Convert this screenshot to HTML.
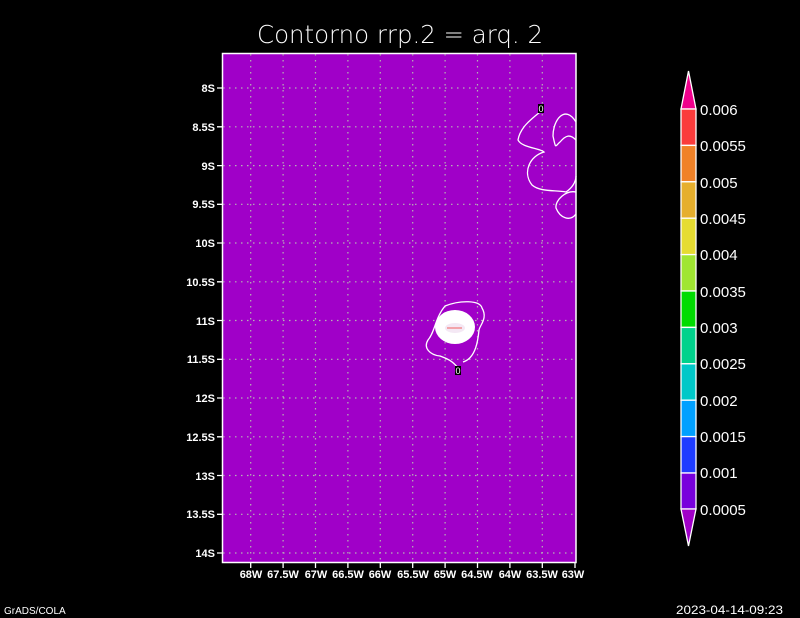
<!DOCTYPE html>
<html><head><meta charset="utf-8"><style>html,body{margin:0;padding:0;background:#000;}svg{display:block}</style></head>
<body>
<svg width="800" height="618" viewBox="0 0 800 618" xmlns="http://www.w3.org/2000/svg" font-family="Liberation Sans, sans-serif">
<rect width="800" height="618" fill="#000"/>
<text x="257" y="43" fill="#fff" font-size="25" textLength="286" lengthAdjust="spacingAndGlyphs" font-family="DejaVu Sans, sans-serif" font-weight="200">Contorno rrp.2 = arq. 2</text>
<rect x="222.5" y="53.5" width="353.5" height="509" fill="#a000c8" stroke="#fff" stroke-width="1.5"/>
<g stroke="#b4b4b4" stroke-width="1.2" stroke-dasharray="1.5 4.5">
<path d="M250.7 54V562M283.1 54V562M315.5 54V562M347.9 54V562M380.3 54V562M412.7 54V562M445.1 54V562M477.5 54V562M509.9 54V562M542.3 54V562"/>
<path d="M223 88H575M223 126.8H575M223 165.6H575M223 204.3H575M223 243H575M223 281.8H575M223 320.5H575M223 359.3H575M223 398H575M223 436.8H575M223 475.5H575M223 514.3H575M223 553H575"/>
</g>
<g stroke="#fff" stroke-width="1.3">
<path d="M217 88H222M217 126.8H222M217 165.6H222M217 204.3H222M217 243H222M217 281.8H222M217 320.5H222M217 359.3H222M217 398H222M217 436.8H222M217 475.5H222M217 514.3H222M217 553H222"/>
<path d="M250.7 563V568M283.1 563V568M315.5 563V568M347.9 563V568M380.3 563V568M412.7 563V568M445.1 563V568M477.5 563V568M509.9 563V568M542.3 563V568M575 563V568"/>
</g>
<g fill="#fff" font-size="11" font-weight="bold" text-anchor="end">
<text x="215" y="92">8S</text><text x="215" y="131">8.5S</text><text x="215" y="170">9S</text><text x="215" y="208">9.5S</text><text x="215" y="247">10S</text><text x="215" y="286">10.5S</text><text x="215" y="325">11S</text><text x="215" y="363">11.5S</text><text x="215" y="402">12S</text><text x="215" y="441">12.5S</text><text x="215" y="480">13S</text><text x="215" y="518">13.5S</text><text x="215" y="557">14S</text>
</g>
<g fill="#fff" font-size="11" font-weight="bold" text-anchor="middle">
<text x="251" y="578">68W</text><text x="283" y="578">67.5W</text><text x="316" y="578">67W</text><text x="348" y="578">66.5W</text><text x="380" y="578">66W</text><text x="413" y="578">65.5W</text><text x="445" y="578">65W</text><text x="477" y="578">64.5W</text><text x="510" y="578">64W</text><text x="542" y="578">63.5W</text><text x="573" y="578">63W</text>
</g>
<g fill="none" stroke="#fff" stroke-width="1.3">
<path d="M540 112 C530 120 520 128 518 140 C522 148 540 148 544 152 C530 156 522 172 532 185 C540 192 555 190 566 192 C572 188 576 182 576 176"/>
<path d="M576 140 C570 134 566 135 560 142 C555 146 556 150 553 136 C553 120 565 104 576 122"/>
<path d="M576 192 C566 190 555 200 556 208 C560 218 570 222 576 214"/>
<path d="M458 368 C452 360 445 358 440 356 C430 355 423 348 428 340 C435 332 435 318 445 306 C460 300 480 300 482 308 C488 318 480 325 479 330 C478 340 476 358 463 362"/>
</g>
<ellipse cx="455" cy="327" rx="20" ry="17" fill="#fff"/>
<ellipse cx="455" cy="328" rx="10" ry="5" fill="#f4e8f4"/>
<path d="M447 328 H462" stroke="#f06060" stroke-width="1"/>
<rect x="538" y="104" width="6" height="9" fill="#000"/><text x="541" y="112" fill="#fff" font-size="9" text-anchor="middle">0</text>
<rect x="455" y="366" width="6" height="9" fill="#000"/><text x="458" y="374" fill="#fff" font-size="9" text-anchor="middle">0</text>
<g stroke="#fff" stroke-width="1.3">
<polygon points="688.5,71 681,109 696,109" fill="#f0008c"/>
<rect x="681" y="109" width="15" height="36.4" fill="#fa3c3c"/>
<rect x="681" y="145.4" width="15" height="36.4" fill="#f08228"/>
<rect x="681" y="181.8" width="15" height="36.4" fill="#e6af2d"/>
<rect x="681" y="218.2" width="15" height="36.4" fill="#e6dc32"/>
<rect x="681" y="254.6" width="15" height="36.4" fill="#a0e632"/>
<rect x="681" y="291" width="15" height="36.4" fill="#00dc00"/>
<rect x="681" y="327.4" width="15" height="36.4" fill="#00d28c"/>
<rect x="681" y="363.8" width="15" height="36.4" fill="#00c8c8"/>
<rect x="681" y="400.2" width="15" height="36.4" fill="#00a0ff"/>
<rect x="681" y="436.6" width="15" height="36.4" fill="#1e3cff"/>
<rect x="681" y="473" width="15" height="36" fill="#7800dc"/>
<polygon points="681,509 696,509 688.5,546" fill="#a000c8"/>
</g>
<g fill="#fff" font-size="15">
<text x="700" y="115">0.006</text><text x="700" y="151">0.0055</text><text x="700" y="188">0.005</text><text x="700" y="224">0.0045</text><text x="700" y="260">0.004</text><text x="700" y="297">0.0035</text><text x="700" y="333">0.003</text><text x="700" y="369">0.0025</text><text x="700" y="406">0.002</text><text x="700" y="442">0.0015</text><text x="700" y="478">0.001</text><text x="700" y="515">0.0005</text>
</g>
<text x="4" y="614" fill="#fff" font-size="10">GrADS/COLA</text>
<text x="676" y="614" fill="#fff" font-size="12" textLength="107" lengthAdjust="spacingAndGlyphs">2023-04-14-09:23</text>
</svg>
</body></html>
